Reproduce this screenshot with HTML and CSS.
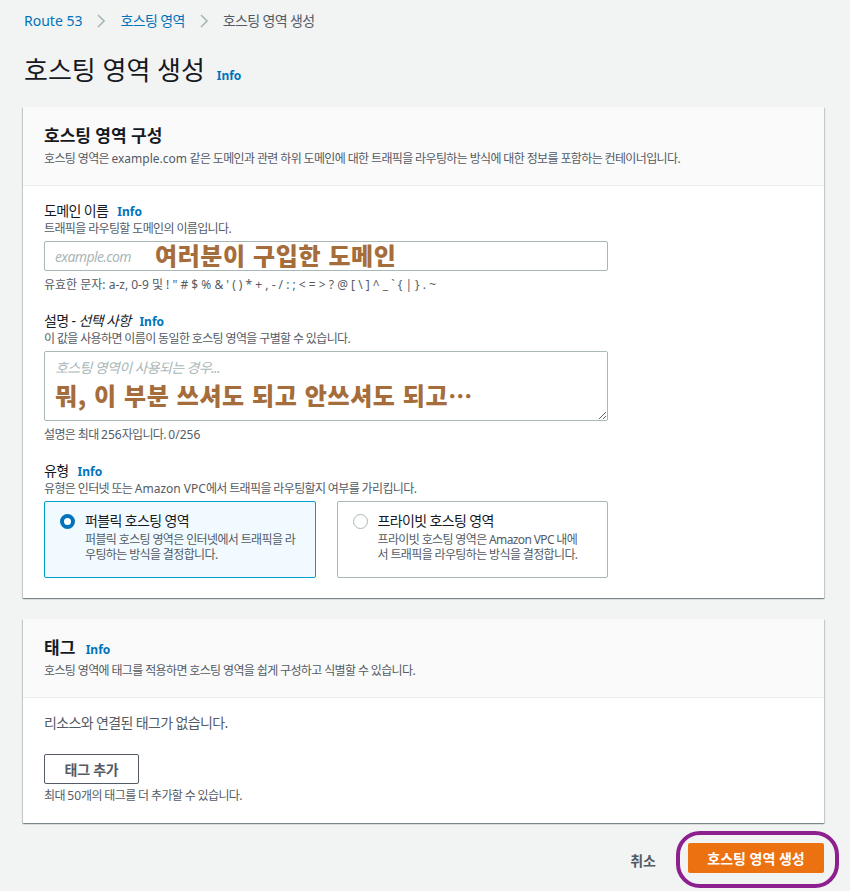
FILE: index.html
```html
<!DOCTYPE html>
<html lang="ko">
<head>
  <meta charset="UTF-8">
  <meta name="viewport" content="width=device-width, initial-scale=1.0">
  <title>호스팅 영역 생성</title>
  <link rel="stylesheet" href="styles.css">
</head>
<body>
  <div class="page">
    <nav class="breadcrumb">
      <a href="#" class="en">Route 53</a>
      <svg class="chevron" width="8" height="14" viewBox="0 0 8 14"><path d="M1 1l6 6-6 6" fill="none" stroke="#aab7b8" stroke-width="1.6"/></svg>
      <a href="#">호스팅 영역</a>
      <svg class="chevron" width="8" height="14" viewBox="0 0 8 14"><path d="M1 1l6 6-6 6" fill="none" stroke="#aab7b8" stroke-width="1.6"/></svg>
      <span class="current">호스팅 영역 생성</span>
    </nav>

    <h1 class="page-title">호스팅 영역 생성 <a href="#" class="info">Info</a></h1>

    <section class="card">
      <div class="card-header">
        <h2>호스팅 영역 구성</h2>
        <p class="card-desc">호스팅 영역은 <span class="en">example.com</span> 같은 도메인과 관련 하위 도메인에 대한 트래픽을 라우팅하는 방식에 대한 정보를 포함하는 컨테이너입니다.</p>
      </div>
      <div class="card-body">
        <div class="field">
          <label for="domain">도메인 이름 <a href="#" class="info">Info</a></label>
          <p class="field-desc">트래픽을 라우팅할 도메인의 이름입니다.</p>
          <div class="input-wrap">
            <input type="text" id="domain" placeholder="example.com">
            <span class="note note-input">여러분이 구입한 도메인</span>
          </div>
          <p class="hint en">유효한 문자: a-z, 0-9 및 ! " # $ % &amp; ' ( ) * + , - / : ; &lt; = &gt; ? @ [ \ ] ^ _ ` { | } . ~</p>
        </div>

        <div class="field">
          <label for="desc">설명 - <i>선택 사항</i> <a href="#" class="info">Info</a></label>
          <p class="field-desc">이 값을 사용하면 이름이 동일한 호스팅 영역을 구별할 수 있습니다.</p>
          <div class="input-wrap">
            <textarea id="desc" placeholder="호스팅 영역이 사용되는 경우..."></textarea>
            <span class="note note-area">뭐, 이 부분 쓰셔도 되고 안쓰셔도 되고…</span>
          </div>
          <p class="hint">설명은 최대 <span class="en">256</span>자입니다. <span class="en">0/256</span></p>
        </div>

        <div class="field">
          <label>유형 <a href="#" class="info">Info</a></label>
          <p class="field-desc">유형은 인터넷 또는 <span class="en">Amazon VPC</span>에서 트래픽을 라우팅할지 여부를 가리킵니다.</p>
          <div class="tiles">
            <label class="tile selected">
              <span class="radio checked"></span>
              <span class="tile-text">
                <span class="tile-title">퍼블릭 호스팅 영역</span>
                <span class="tile-desc">퍼블릭 호스팅 영역은 인터넷에서 트래픽을 라우팅하는 방식을 결정합니다.</span>
              </span>
            </label>
            <label class="tile">
              <span class="radio"></span>
              <span class="tile-text">
                <span class="tile-title">프라이빗 호스팅 영역</span>
                <span class="tile-desc">프라이빗 호스팅 영역은 Amazon VPC 내에서 트래픽을 라우팅하는 방식을 결정합니다.</span>
              </span>
            </label>
          </div>
        </div>
      </div>
    </section>

    <section class="card">
      <div class="card-header">
        <h2>태그 <a href="#" class="info">Info</a></h2>
        <p class="card-desc">호스팅 영역에 태그를 적용하면 호스팅 영역을 쉽게 구성하고 식별할 수 있습니다.</p>
      </div>
      <div class="card-body tags-body">
        <p class="empty">리소스와 연결된 태그가 없습니다.</p>
        <button class="btn-normal">태그 추가</button>
        <p class="hint">최대 <span class="en">50</span>개의 태그를 더 추가할 수 있습니다.</p>
      </div>
    </section>

    <div class="actions">
      <a href="#" class="cancel">취소</a>
      <span class="circled">
        <button class="btn-primary">호스팅 영역 생성</button>
      </span>
    </div>
  </div>
</body>
</html>
```

FILE: styles.css
```css
body {
  margin: 0;
  background: #f2f3f3;
  font-family: "Noto Sans", "Noto Sans CJK KR", sans-serif;
  font-size: 14px;
  letter-spacing: -0.045em;
  color: #16191f;
}
a {
  text-decoration: none;
}
p {
  margin: 0;
}
.en {
  letter-spacing: 0;
}
.page {
  padding: 11px 26px 0 23px;
}
.breadcrumb {
  display: flex;
  align-items: center;
  gap: 15px;
  padding-left: 1px;
  height: 20px;
  font-size: 14px;
  line-height: 20px;
}
.breadcrumb a {
  color: #0073bb;
}
.breadcrumb .current {
  color: #545b64;
}
.page-title {
  margin: 22px 0 0 1px;
  font-size: 26px;
  font-weight: 400;
  line-height: 34px;
  letter-spacing: 0;
}
.info {
  color: #0073bb;
  font-size: 12px;
  font-weight: 700;
  line-height: 1;
  letter-spacing: 0;
  margin-left: 6px;
}
.page-title .info {
  margin-left: 5px;
}
.card {
  background: #fff;
  margin-top: 20px;
  box-shadow: 0 1px 1px 0 rgba(0, 28, 36, 0.3), 1px 1px 1px 0 rgba(0, 28, 36, 0.15), -1px 1px 1px 0 rgba(0, 28, 36, 0.15);
}
.card + .card {
  margin-top: 21px;
}
.card-header {
  background: #fafafa;
  border-bottom: 1px solid #eaeded;
  padding: 18px 20px 18px 21px;
}
.card-header h2 {
  margin: 0;
  font-size: 17px;
  line-height: 22px;
  font-weight: 700;
  letter-spacing: 0;
}
.card-desc {
  margin-top: 4px;
  font-size: 12px;
  line-height: 16px;
  color: #545b64;
}
.card-body {
  padding: 15px 20px 20px 21px;
}
.field + .field {
  margin-top: 18px;
}
.field > label {
  display: block;
  line-height: 20px;
  font-size: 14px;
}
.field-desc,
.hint {
  font-size: 12px;
  line-height: 16px;
  color: #545b64;
}
.hint {
  margin-top: 6px;
}
.input-wrap {
  position: relative;
  width: 564px;
  margin-top: 4px;
}
input,
textarea {
  display: block;
  box-sizing: border-box;
  width: 564px;
  border: 1px solid #aab7b8;
  border-radius: 2px;
  font-family: inherit;
  font-size: 14px;
  letter-spacing: -0.045em;
  padding: 4px 10px;
  color: #16191f;
}
input {
  height: 30px;
}
textarea {
  height: 70px;
  padding-top: 5px;
  resize: vertical;
}
input::placeholder,
textarea::placeholder {
  color: #aab7b8;
  font-style: italic;
}
.note {
  position: absolute;
  color: #a56d3b;
  font-family: "Noto Sans CJK KR", sans-serif;
  font-weight: 900;
  font-size: 24px;
  line-height: 28px;
  letter-spacing: 0.6px;
  white-space: nowrap;
}
.note-input {
  left: 111px;
  top: 0;
}
.note-area {
  left: 11px;
  top: 30px;
}
.tiles {
  display: grid;
  grid-template-columns: 1fr 1fr;
  gap: 21px;
  width: 564px;
  margin-top: 4px;
}
.tile {
  display: flex;
  gap: 10px;
  box-sizing: border-box;
  height: 77px;
  padding: 10px 15px;
  border: 1px solid #aab7b8;
  border-radius: 2px;
  background: #fff;
}
.tile.selected {
  background: #f1faff;
  border-color: #00a1c9;
}
.radio {
  flex: none;
  box-sizing: border-box;
  width: 15px;
  height: 15px;
  margin-top: 2px;
  border: 1px solid #aab7b8;
  border-radius: 50%;
  background: #fff;
}
.radio.checked {
  border: 4.5px solid #0073bb;
}
.tile-text {
  display: flex;
  flex-direction: column;
  min-width: 0;
}
.tile-title {
  font-size: 14px;
  line-height: 18px;
}
.tile-desc {
  margin-top: 2px;
  font-size: 12px;
  line-height: 15px;
  color: #545b64;
  word-break: break-all;
}
.tile + .tile .tile-desc {
  padding-right: 8px;
}
.empty {
  line-height: 20px;
  color: #545b64;
}
.btn-normal {
  display: block;
  margin-top: 21px;
  width: 95px;
  height: 30px;
  padding: 0;
  border: 1px solid #545b64;
  border-radius: 2px;
  background: #fff;
  color: #545b64;
  font-family: inherit;
  font-size: 14px;
  font-weight: 700;
  letter-spacing: -0.02em;
}
.tags-body .hint {
  margin-top: 4px;
}
.tags-body {
  padding-bottom: 19px;
}
.actions {
  display: flex;
  justify-content: flex-end;
  align-items: center;
  gap: 20px;
  margin-top: 8px;
  margin-right: -15px;
}
.cancel {
  color: #545b64;
  font-weight: 700;
  font-size: 14px;
  letter-spacing: 0;
  margin-top: 1px;
}
.circled {
  display: block;
  border: 4px solid #8d1f8e;
  border-radius: 24px;
  padding: 8px 11px 11px 8px;
}
.btn-primary {
  display: block;
  width: 136px;
  height: 30px;
  border: none;
  border-radius: 2px;
  background: #ec7211;
  color: #fff;
  font-family: inherit;
  font-size: 14px;
  font-weight: 700;
  letter-spacing: 0;
}
```
